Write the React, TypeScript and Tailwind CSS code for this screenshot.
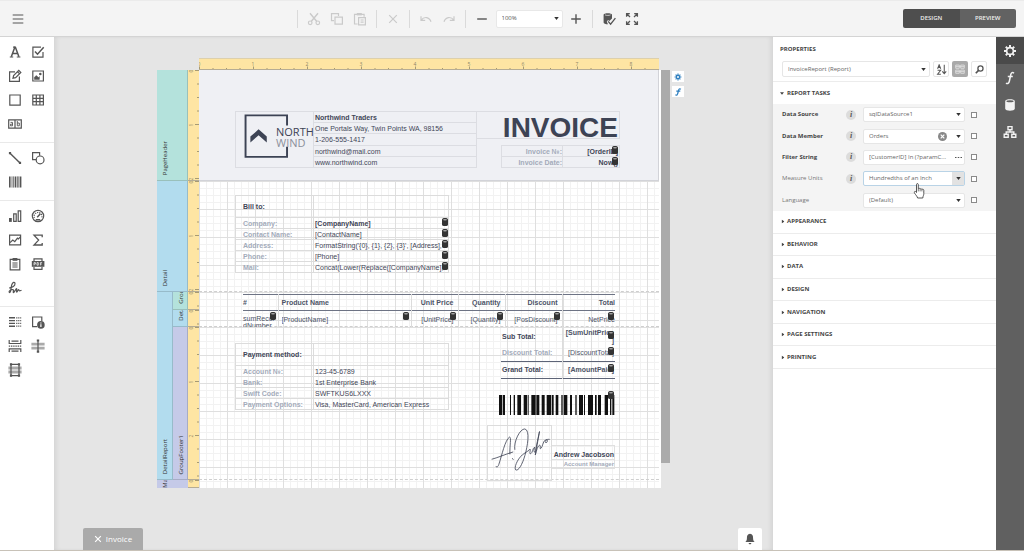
import { useState } from "react";
import type { ReactNode } from "react";
import clsx from "clsx";

interface ChildrenProps {
  children: ReactNode;
}

// ---------- shared bits ----------

function Icon({
  children,
  className = "w-3.5 h-3.5",
  strokeWidth = 1.2,
}: ChildrenProps & { className?: string; strokeWidth?: number }) {
  return (
    <svg
      viewBox="0 0 14 14"
      className={clsx("shrink-0", className)}
      fill="none"
      stroke="currentColor"
      strokeWidth={strokeWidth}
      aria-hidden="true"
    >
      {children}
    </svg>
  );
}

function Caret({ className, size = "w-[5px] h-[3px]" }: { className?: string; size?: string }) {
  return (
    <svg viewBox="0 0 6 4" className={clsx("shrink-0", size, className)} aria-hidden="true">
      <path d="M0 0h6L3 4z" fill="currentColor" />
    </svg>
  );
}

function DbMark({ className = "top-0 right-px" }: { className?: string }) {
  return (
    <svg viewBox="0 0 6 8" className={clsx("absolute w-1.5 h-2", className)} aria-hidden="true">
      <path d="M0 1.6C0 .7 1 0 3 0s3 .7 3 1.6v4.8C6 7.3 5 8 3 8S0 7.3 0 6.4z" fill="#333" />
      <ellipse cx="3" cy="1.7" rx="2" ry=".7" fill="#aaa" />
    </svg>
  );
}

// ---------- toolbox ----------

const tools: { name: string; icon: ReactNode }[][] = [
  [
    {
      name: "Label",
      icon: (
        <>
          <path d="M3.3 11.8 6.8 2.2h.6l3.5 9.6M4.6 8.4h5" strokeWidth={1.5} />
          <path d="M1.8 12h3.4M8.8 12h3.6M5 2.2h2" />
        </>
      ),
    },
    {
      name: "Check Box",
      icon: (
        <>
          <path d="M12 7v5.2H1.9V2.1H10" />
          <path d="m4 6.4 2.5 2.8 6.2-7" strokeWidth={1.5} />
        </>
      ),
    },
    {
      name: "Rich Text",
      icon: (
        <>
          <path d="M7 2.8H1.6v9.6h9.8V7.6" />
          <path d="m5 9.2.6-2.6 5.2-5.2 2 2-5.2 5.2zM9.6 2.8l2 2" />
        </>
      ),
    },
    {
      name: "Picture Box",
      icon: (
        <>
          <path d="M1.8 2h10.6v10H1.8z" />
          <path d="M3.4 10.4V8.2l2-1.6 2 2 1-1v2.8z" fill="currentColor" strokeWidth={0.5} />
          <circle cx="9.3" cy="5" r="1.3" fill="currentColor" stroke="none" />
        </>
      ),
    },
    { name: "Panel", icon: <path d="M1.8 2h10.4v10.2H1.8z" /> },
    { name: "Table", icon: <path d="M1.8 2h10.6v10H1.8zM5.3 2v10M8.9 2v10M1.8 5.3h10.6M1.8 8.7h10.6" /> },
    {
      name: "Character Comb",
      icon: (
        <>
          <path d="M.7 2.8h12.6v8.4H.7zM7 2.8v8.4" />
          <path d="M2.5 5.4h2v3.4h-2V7.2h2M9.3 4v4.8h2V6h-2" strokeWidth={0.9} />
        </>
      ),
    },
  ],
  [
    {
      name: "Line",
      icon: (
        <>
          <path d="m2 2.2 10 9.8" strokeWidth={1.4} />
          <path d="M.9 1.1h2.2v2.2H.9zM10.9 10.8h2.2V13h-2.2z" fill="currentColor" stroke="none" />
        </>
      ),
    },
    {
      name: "Shape",
      icon: (
        <>
          <path d="M5.2 8.6H1.6V1.7h7v3" />
          <circle cx="9.1" cy="8.9" r="3.9" />
        </>
      ),
    },
    {
      name: "Barcode",
      icon: (
        <>
          <path d="M1.8 1.4v11.2M7.5 1.4v11.2M12.6 1.4v11.2" strokeWidth={1.6} />
          <path d="M4 1.4v11.2M5.6 1.4v11.2M9.4 1.4v11.2M10.8 1.4v11.2" strokeWidth={0.8} />
        </>
      ),
    },
  ],
  [
    {
      name: "Chart",
      icon: (
        <>
          <path d="M5.7 4.8h2.5v7.6H5.7zM10.2 1.8h2.5v10.6h-2.5z" />
          <path d="M1 9h2.8v3.9H1z" fill="currentColor" stroke="none" />
        </>
      ),
    },
    {
      name: "Gauge",
      icon: (
        <>
          <circle cx="7" cy="7" r="5.7" />
          <path d="M3.3 9a4 4 0 1 1 7.4 0" strokeDasharray="1.2 1" />
          <path d="M6.2 8.2 9.4 4.8M4.8 10.8h4.4" strokeWidth={1.5} />
        </>
      ),
    },
    {
      name: "Sparkline",
      icon: (
        <>
          <path d="M1.6 2.2h11v9.6h-11z" />
          <path d="M2 9.6 4.8 7l2 1.6 2.6-3.4 1 .8 2-2.2" />
        </>
      ),
    },
    { name: "Pivot Grid", icon: <path d="M11.2 4.2v-2H3l4.6 4.9L3 12h8.2v-2" strokeWidth={1.3} /> },
    {
      name: "Subreport",
      icon: (
        <>
          <path d="M2.2 2.4h9.6v10.4H2.2zM4.4 6h5.2M4.4 8h5.2M4.4 10h5.2" />
          <path d="M4.6 1h4.8v2.8H4.6z" fill="currentColor" stroke="none" />
        </>
      ),
    },
    {
      name: "PDF Content",
      icon: (
        <>
          <path d="M3 4V1.8h8V4M3 10v2.4h8V10" />
          <path d="M.8 4h12.6v5.8H.8z" fill="currentColor" stroke="none" />
          <path d="M3 8.4V5.6h1.4v1.5H3M6 5.6v2.6h1.3V5.6zM9.4 8.4V5.6h1.7M9.4 7h1.4" stroke="#fff" strokeWidth={0.7} />
        </>
      ),
    },
    {
      name: "PDF Signature",
      icon: (
        <path d="M1.2 6.8c3 .2 6-2 5.8-4.2C6.8.6 4.6 1 3.7 4 2.9 6.8 3.1 9.7 2.3 11c-.8 1.2-1.6.2-.9-.8 1.2-1.6 3.9-2.2 4.2-.8.1 1-1 1.7-.2 2.2 1.2.5 2.2-4 3.2-3.9.8.2-.7 3.2.1 3.4.9.1 1.2-2.5 2-2.4.6.2 0 1.3 1 1.2.6-.1 1-.4 1.8-.7" />
      ),
    },
  ],
  [
    {
      name: "Table of Contents",
      icon: (
        <>
          <path d="M1 2.8h6M1 5.6h6M1 8.4h6M1 11.2h6" strokeWidth={1.4} />
          <path d="M8.2 2.8h5M8.2 5.6h5M8.2 8.4h5M8.2 11.2h5" strokeDasharray="1.2 .8" />
        </>
      ),
    },
    {
      name: "Page Info",
      icon: (
        <>
          <path d="M6 11.6H1.6V2h9.2v4" />
          <circle cx="9.9" cy="9.9" r="3.8" fill="currentColor" stroke="none" />
          <path d="M9.9 9.3v2.8M9.9 7.5v1" stroke="#fff" />
        </>
      ),
    },
    {
      name: "Page Break",
      icon: (
        <>
          <path d="M1.2 1v3.5h11.6V1M3.5 2.2h7M1.2 13V9.8h11.6V13M3.5 12.2h7" />
          <path d="M.8 7.1h12.6" strokeDasharray="1.4 .8" />
        </>
      ),
    },
    {
      name: "Cross-Band Line",
      icon: (
        <>
          <path d="M.4 3.8h13.2v2.8H.4zM.4 7.8h13.2v2.8H.4z" fill="#aaa" stroke="none" />
          <path d="M7 1v12" />
          <path d="M5.8.4h2.4v2.2H5.8zM5.8 11.6h2.4v2.2H5.8z" fill="currentColor" stroke="none" />
        </>
      ),
    },
    {
      name: "Cross-Band Box",
      icon: (
        <>
          <path d="M.4 3.6h13.2v3H.4zM.4 7.6h13.2v3H.4z" fill="#aaa" stroke="none" />
          <path d="M3 1.4h8v11.2H3z" />
          <path d="M1.9.3h2.2v2.2H1.9zM9.9.3h2.2v2.2H9.9zM1.9 11.5h2.2v2.2H1.9zM9.9 11.5h2.2v2.2H9.9z" fill="currentColor" stroke="none" />
        </>
      ),
    },
  ],
];

function Toolbox() {
  return (
    <aside className="w-[54px] shrink-0 bg-white text-[#555]">
      {tools.map((group, i) => (
        <div
          key={i}
          className={clsx(
            "grid grid-cols-2 pl-1 pr-[5px] pt-[3px] pb-1.5",
            i < tools.length - 1 && "border-b border-[#e9e9e9]"
          )}
        >
          {group.map((tool) => (
            <button key={tool.name} aria-label={tool.name} className="h-6 flex items-center justify-center">
              <Icon>{tool.icon}</Icon>
            </button>
          ))}
        </div>
      ))}
    </aside>
  );
}

// ---------- top bar ----------

function BarButton({ label, children, disabled }: ChildrenProps & { label: string; disabled?: boolean }) {
  return (
    <button
      aria-label={label}
      disabled={disabled}
      className={clsx(
        "w-[23px] h-6 flex items-center justify-center",
        disabled ? "text-[#cacaca]" : "text-[#555]"
      )}
    >
      <Icon>{children}</Icon>
    </button>
  );
}

function BarGroup({ children }: ChildrenProps) {
  return <div className="flex items-center h-[18px] border-l border-[#dadada] pl-[5px] pr-1">{children}</div>;
}

function TopBar() {
  return (
    <header className="h-[37px] shrink-0 flex items-center justify-between bg-[#f4f4f4] border-t border-b border-t-[#ebebeb] border-b-[#d4d4d4]">
      <button aria-label="Menu" className="w-[35px] mr-1.5 h-6 flex items-center justify-center text-[#555]">
        <Icon strokeWidth={1.1}>
          <path d="M1.7 3h10.6M1.7 7h10.6M1.7 11h10.6" />
        </Icon>
      </button>
      <div className="flex items-center">
        <BarGroup>
          <BarButton label="Cut" disabled>
            <path d="m3 1.2 6.6 8M11 1.2l-6.6 8" strokeWidth={1.4} />
            <circle cx="3.2" cy="10.8" r="1.8" />
            <circle cx="10.8" cy="10.8" r="1.8" />
          </BarButton>
          <BarButton label="Copy" disabled>
            <path d="M4 8.6H1.5v-7h7V4M5 5.2h7.4v7H5z" />
          </BarButton>
          <BarButton label="Paste" disabled>
            <path d="M4.6 12H1.5V2.4h9.6v2.4M5.6 5.6h6.8v7.2H5.6zM7.6 8h3M7.6 10.2h3" />
            <path d="M3.8 1h5v2.4h-5z" fill="currentColor" stroke="none" />
          </BarButton>
        </BarGroup>
        <BarGroup>
          <BarButton label="Delete" disabled>
            <path d="m3.2 3.2 7.6 7.6M10.8 3.2l-7.6 7.6" />
          </BarButton>
        </BarGroup>
        <BarGroup>
          <BarButton label="Undo" disabled>
            <path d="M2 4.2v4.2h4.2M2.2 8.2c2.8-4 8.2-3.6 9.8 1.6" />
          </BarButton>
          <BarButton label="Redo" disabled>
            <path d="M12 4.2v4.2H7.8M11.8 8.2C9 4.2 3.6 4.6 2 9.8" />
          </BarButton>
        </BarGroup>
        <BarGroup>
          <BarButton label="Zoom out">
            <path d="M2.2 7h9.6" strokeWidth={1.4} />
          </BarButton>
          <div className="relative mx-0.5">
            <select
              aria-label="Zoom"
              className="block appearance-none w-[67px] h-[18px] pl-[5px] rounded-xs border border-[#e8e8e8] bg-white text-[6px] text-[#555]"
            >
              <option>100%</option>
            </select>
            <Caret className="absolute right-1 top-[7px] text-[#333] pointer-events-none" />
          </div>
          <BarButton label="Zoom in">
            <path d="M2.2 7h9.6M7 2.2v9.6" strokeWidth={1.4} />
          </BarButton>
        </BarGroup>
        <BarGroup>
          <BarButton label="Validate bindings">
            <path d="M1.6 2.8c0-2 8.4-2 8.4 0v3.6L7.4 9 6 8l-1.2 1.8L6 12.2c-2.4 0-4.4-.6-4.4-1.8z" fill="currentColor" stroke="none" />
            <path d="M3 2.9c1.4.7 4.2.7 5.6 0" stroke="#f4f4f4" strokeWidth={0.7} />
            <path d="m6.2 9.4 2.4 2.8 4.8-6" strokeWidth={1.3} />
          </BarButton>
          <BarButton label="Full screen">
            <path d="M1.6 4.8V1.6h3.2M9.2 1.6h3.2v3.2M12.4 9.2v3.2H9.2M4.8 12.4H1.6V9.2M2 2l3 3M12 2 9 5M12 12 9 9M2 12l3-3" strokeWidth={1.3} />
          </BarButton>
        </BarGroup>
      </div>
      <div className="flex w-[113px] mr-2 h-[19px] rounded-xs overflow-hidden text-[6px] font-semibold text-[#eee]">
        <button className="flex-1 bg-[#4e4e4e]">DESIGN</button>
        <button className="flex-1 bg-[#626262]">PREVIEW</button>
      </div>
    </header>
  );
}

// ---------- report surface ----------

const INCH = 54;

function HorizontalRuler() {
  return (
    <svg className="block w-[460px] h-3 bg-[#fee5a3]" viewBox="0 0 460 12" aria-hidden="true">
      <path d="M0 .5h460" stroke="#ddd0ac" />
      {Array.from({ length: 34 }, (_, i) => (
        <path key={i} d={`M${i * (INCH / 4) + 0.5} ${i % 4 ? 10 : 8.5}V12`} stroke="#8f8668" strokeWidth={0.8} />
      ))}
      {Array.from({ length: 9 }, (_, n) => (
        <text key={n} x={n * INCH} y={7.5} textAnchor="middle" fontSize={5} fill="#8f8668">
          {n}
        </text>
      ))}
      <path d="M0 11.5h460" stroke="#b5ac94" />
    </svg>
  );
}

function VerticalRuler({ length, className }: { length: number; className: string }) {
  return (
    <svg
      className={clsx("block w-[11px] bg-[#fee5a3]", className)}
      viewBox={`0 0 11 ${length}`}
      aria-hidden="true"
    >
      {Array.from({ length: Math.ceil((length / INCH) * 4) }, (_, i) => (
        <path key={i} d={`M${i % 4 ? 9 : 7} ${i * (INCH / 4) + 0.5}H11`} stroke="#8f8668" strokeWidth={0.8} />
      ))}
      {Array.from({ length: Math.ceil(length / INCH) }, (_, n) => (
        <text key={n} transform={`translate(5 ${n * INCH + 1}) rotate(-90)`} textAnchor="middle" fontSize={5} fill="#8f8668">
          {n}
        </text>
      ))}
      <path d={`M0 ${length - 0.5}H11`} stroke="#b5ac94" />
    </svg>
  );
}

function BandLabel({ children, className }: ChildrenProps & { className: string }) {
  return (
    <div className={clsx("flex items-end overflow-hidden pl-1 pb-[5px] border-b border-r border-black/15", className)}>
      <span className="[writing-mode:vertical-rl] rotate-180 text-[6px] leading-[8px] text-[#333]">{children}</span>
    </div>
  );
}

interface InfoRow {
  label: string;
  value: string;
  bound?: boolean;
  strong?: boolean;
}

function InfoTable({ title, rows }: { title: string; rows: InfoRow[] }) {
  return (
    <table className="w-[214px] table-fixed border-collapse text-[#3f4657]">
      <thead>
        <tr className="h-[22px]">
          <th className="w-[78px] border border-[#dcdcdc] pl-[7px] text-left">{title}</th>
          <td className="border border-[#dcdcdc]" />
        </tr>
      </thead>
      <tbody>
        {rows.map((row) => (
          <tr key={row.label} className="h-[11px]">
            <th className="border border-[#dcdcdc] pl-[7px] text-left text-[#a3abba]">{row.label}</th>
            <td
              className={clsx(
                "relative border border-[#dcdcdc] pl-px whitespace-nowrap overflow-hidden",
                row.strong && "font-bold"
              )}
            >
              {row.value}
              {row.bound && <DbMark className="top-0 right-0" />}
            </td>
          </tr>
        ))}
      </tbody>
    </table>
  );
}

const billRows: InfoRow[] = [
  { label: "Company:", value: "[CompanyName]", bound: true, strong: true },
  { label: "Contact Name:", value: "[ContactName]", bound: true },
  { label: "Address:", value: "FormatString('{0}, {1}, {2}, {3}', [Address],", bound: true },
  { label: "Phone:", value: "[Phone]", bound: true },
  { label: "Mail:", value: "Concat(Lower(Replace([CompanyName],", bound: true },
];

const paymentRows: InfoRow[] = [
  { label: "Account №:", value: "123-45-6789" },
  { label: "Bank:", value: "1st Enterprise Bank" },
  { label: "Swift Code:", value: "SWFTKUS6LXXX" },
  { label: "Payment Options:", value: "Visa, MasterCard, American Express" },
];

const companyLines = [
  "Northwind Traders",
  "One Portals Way, Twin Points WA, 98156",
  "1-206-555-1417",
  "northwind@mail.com",
  "www.northwind.com",
];

function Logo() {
  return (
    <div className="relative w-[79px] h-[57px] border border-[#dcdde2]">
      <svg viewBox="0 0 79 57" className="w-full h-full" aria-hidden="true">
        <path d="M52.5 14V3.5h-43v43h43V36" fill="none" stroke="#3d4354" strokeWidth="2" />
        <path d="M14.5 25.5 23 18l8.5 7.5v6L23 24l-8.5 7.5z" fill="#3d4354" />
      </svg>
      <div className="absolute left-10 top-3.5 font-['Open_Sans'] text-[11px] leading-[11px] text-[#3d4354]">
        <p>NORTH</p>
        <p className="text-[#8b8f9b]">WIND</p>
      </div>
    </div>
  );
}

function PageHeaderBand() {
  return (
    <section className="h-[111px] flex items-start pl-9 pt-[41px] bg-[#eff0f4] border-b border-r border-[#d2d3d8]">
      <Logo />
      <ul className="w-[163px] h-[57px] grid auto-rows-fr border-r border-t border-[#dcdde2]">
        {companyLines.map((line, i) => (
          <li key={line} className={clsx("pl-px border-b border-[#dcdde2] leading-[11px]", i === 0 && "font-bold")}>
            {line}
          </li>
        ))}
      </ul>
      <div className="w-[143px] flex flex-col items-end">
        <h1 className="w-full h-7 pr-px border border-l-0 border-[#dcdde2] text-right text-[28px] leading-[32px] font-bold text-[#3d4354]">
          INVOICE
        </h1>
        <table className="mt-1.5 w-[119px] table-fixed border-collapse text-right font-bold">
          <tbody>
            <tr className="h-[11px]">
              <th className="border border-[#dcdde2] text-[#a3abba]">Invoice №:</th>
              <td className="relative w-[57px] pr-px border border-[#dcdde2]">
                [OrderID]
                <DbMark />
              </td>
            </tr>
            <tr className="h-[11px]">
              <th className="border border-[#dcdde2] text-[#a3abba]">Invoice Date:</th>
              <td className="relative pr-px border border-[#dcdde2]">
                Now()
                <DbMark />
              </td>
            </tr>
          </tbody>
        </table>
      </div>
    </section>
  );
}

const columns = [
  { title: "#", field: "sumRecordNumber" },
  { title: "Product Name", field: "[ProductName]" },
  { title: "Unit Price", field: "[UnitPrice]" },
  { title: "Quantity", field: "[Quantity]" },
  { title: "Discount", field: "[PosDiscount]" },
  { title: "Total", field: "NetPrice" },
];

function ProductTable() {
  return (
    <div className="ml-11 mr-11">
      <table className="w-full table-fixed border-collapse text-[#4d5467]">
        <colgroup>
          <col className="w-[35px]" />
          <col />
          <col className="w-[47px]" />
          <col className="w-[47px]" />
          <col className="w-[57px]" />
          <col className="w-[53px]" />
        </colgroup>
        <thead>
          <tr className="h-4 border-t border-b border-[#6d7384]">
            {columns.map((col, i) => (
              <th
                key={col.title}
                className={clsx(
                  i > 0 && "border-l border-l-[#dcdcdc]",
                  i < 2 ? "text-left" : "text-right",
                  i === 1 && "pl-[3px]",
                  i > 1 && i < 5 && "pr-1"
                )}
              >
                {col.title}
              </th>
            ))}
          </tr>
        </thead>
        <tbody>
          <tr>
            {columns.map((col, i) => (
              <td
                key={col.title}
                className={clsx(
                  "relative",
                  i > 0 && "border-l border-l-[#dcdcdc]",
                  i === 1 && "pl-[3px]",
                  i > 1 && "text-right",
                  i > 1 && i < 5 && "pr-1"
                )}
              >
                <div className={clsx("h-4 overflow-hidden", i === 0 ? "pt-1 leading-[7px] break-all" : "leading-[18px]")}>
                  {col.field}
                </div>
                <DbMark className={i === 5 ? "top-px right-px" : "top-px right-0.5"} />
              </td>
            ))}
          </tr>
        </tbody>
      </table>
    </div>
  );
}

// start / end pairs of the dark bars, 3 units per pixel
const bars = [
  [0, 10], [12, 18], [33, 36], [44, 48], [55, 66], [74, 84], [86, 89], [97, 110], [112, 121],
  [128, 137], [143, 156], [158, 164], [170, 178], [187, 191], [194, 205], [213, 219], [229, 233],
  [240, 252], [255, 258], [267, 282], [288, 293], [297, 306], [317, 327], [333, 337], [340, 346],
];

function Totals() {
  return (
    <table className="mt-px w-[114px] table-fixed border-collapse text-[#4d5467] font-bold">
      <tbody>
        <tr className="h-[17px]">
          <th className="w-[61px] pl-px text-left text-[#3f4657]">Sub Total:</th>
          <td className="relative border-l border-[#dcdcdc] pr-px text-right leading-[8px]">
            [SumUnitPrice
            <br />]
            <DbMark className="top-[3px] right-px" />
          </td>
        </tr>
        <tr className="h-4 border-b border-b-[#5d6477]">
          <th className="pl-px text-left text-[#a3abba] whitespace-nowrap">Discount Total:</th>
          <td className="relative border-l border-l-[#dcdcdc] pr-px text-right font-normal">
            [DiscountTotal]
            <DbMark className="top-0.5 right-px" />
          </td>
        </tr>
        <tr className="h-[17px] border-b border-b-[#5d6477]">
          <th className="pl-px text-left text-[#3f4657]">Grand Total:</th>
          <td className="relative border-l border-l-[#dcdcdc] pr-px text-right">
            [AmountPaid]
            <DbMark className="top-0.5 right-px" />
          </td>
        </tr>
      </tbody>
    </table>
  );
}

function GroupFooterBand() {
  return (
    <section className="h-[153px] flex items-start justify-between pl-9 pr-11 border-b border-dashed border-[#cfcfcf]">
      <div className="pt-4">
        <InfoTable title="Payment method:" rows={paymentRows} />
      </div>
      <div className="w-32 flex flex-col items-end">
        <Totals />
        <div className="relative mt-4 w-[116px]">
          <svg viewBox="0 0 348 60" className="w-[116px] h-5" role="img" aria-label="Barcode">
            {bars.map(([from, to]) => (
              <path key={from} d={`M${from} 0H${to}V60H${from}z`} fill="#111" />
            ))}
          </svg>
          <DbMark className="-top-1 right-px" />
        </div>
        <div className="mt-2.5 w-full flex items-start">
          <div className="w-[65px] h-14 shrink-0 border border-[#dcdcdc]">
            <svg viewBox="0 0 193 166" className="w-full h-full" fill="none" stroke="#3d4354" strokeWidth="2.5" strokeLinecap="round" aria-hidden="true">
              <path d="M24 124c2 4 6 3 9-6C42 92 52 42 66 34c6 0 0 26 1 52M12 102c16-4 38-14 64-22M75 100l2 3" />
              <path d="M82 72C78 48 98 8 113 9c17 4 8 54 0 82-8 28-20 48-28 44-6-6 4-32 20-46 12-10 20-12 24-18 2 6-4 16 2 14s6-18 12-20c-2 8-4 16 2 16 2-14 10-50 13-64-2 10-8 46-13 72 4-14 8-30 14-30 4 2-2 14 3 10 6-4 6-22 14-26s8 8 2 8-2-12 10-10" />
            </svg>
          </div>
          <div className="flex-1 mt-5 text-right font-bold whitespace-nowrap">
            <p className="h-[15px] pt-1 flex justify-end border border-l-0 border-[#e0e0e0] leading-[9px] text-[#3f4657]">
              Andrew Jacobson
            </p>
            <p className="h-[9px] border border-t-0 border-l-0 border-[#e0e0e0] text-[6px] leading-[9px] text-[#a3abba]">
              Account Manager
            </p>
          </div>
        </div>
      </div>
    </section>
  );
}

const grid =
  "bg-[linear-gradient(to_right,#dfdfdf_1px,transparent_1px),linear-gradient(to_bottom,#dfdfdf_1px,transparent_1px),linear-gradient(to_right,#f2f2f2_1px,transparent_1px),linear-gradient(to_bottom,#f2f2f2_1px,transparent_1px)] bg-[size:28px_28px,28px_28px,7px_7px,7px_7px]";

function ReportSurface() {
  return (
    <div className="pl-[103px] pt-[21px]">
      <div className="pl-[42px]">
        <HorizontalRuler />
      </div>
      <div className="flex items-start">
        <div className="w-[31px] shrink-0">
          <BandLabel className="h-[111px] bg-[#b4e2dc]">PageHeader</BandLabel>
          <BandLabel className="h-[111px] bg-[#b2dcee]">Detail</BandLabel>
          <div className="flex">
            <BandLabel className="w-4 h-[188px] bg-[#b2dcee]">DetailReport</BandLabel>
            <div className="flex-1">
              <BandLabel className="h-[18px] bg-[#b4e2dc]">GroupHeader1</BandLabel>
              <BandLabel className="h-[17px] bg-[#b2dcee]">Detail1</BandLabel>
              <BandLabel className="h-[153px] bg-[#c5cae8]">GroupFooter1</BandLabel>
            </div>
          </div>
          <div className="h-2 flex items-end overflow-hidden pl-1 bg-[#c5cae8]">
            <span className="[writing-mode:vertical-rl] rotate-180 text-[6px] leading-[8px] text-[#333]">Margin</span>
          </div>
        </div>
        <div className="w-[11px] shrink-0">
          <VerticalRuler length={111} className="h-[111px]" />
          <VerticalRuler length={111} className="h-[111px]" />
          <VerticalRuler length={18} className="h-[18px]" />
          <VerticalRuler length={17} className="h-[17px]" />
          <VerticalRuler length={153} className="h-[153px]" />
          <VerticalRuler length={8} className="h-2" />
        </div>
        <main className="w-[462px] shrink-0 pr-0.5 bg-white font-['Liberation_Sans',sans-serif] text-[7px] leading-[9px] text-[#3f4657]">
          <PageHeaderBand />
          <section className={clsx("h-[111px] pl-9 pt-3.5 border-b border-dashed border-[#cfcfcf]", grid)}>
            <InfoTable title="Bill to:" rows={billRows} />
          </section>
          <section className={clsx("h-[35px] pt-0.5 border-b border-dashed border-[#cfcfcf]", grid)}>
            <ProductTable />
          </section>
          <div className={grid}>
            <GroupFooterBand />
            <div className="h-2" />
          </div>
        </main>
        <div className="w-[9px] h-[393px] shrink-0 bg-[#ababab]" />
        <div className="ml-0.5 pt-px flex flex-col gap-1 text-[#2f7fbf]">
          <button aria-label="Band settings" className="w-3 h-[11px] bg-white flex items-center justify-center">
            <Icon className="w-2 h-2" strokeWidth={2.6}>
              <circle cx="7" cy="7" r="3" />
              <path d="M7 1v2M7 11v2M1 7h2M11 7h2M2.8 2.8l1.4 1.4M9.8 9.8l1.4 1.4M2.8 11.2l1.4-1.4M9.8 4.2l1.4-1.4" strokeWidth={2} />
            </Icon>
          </button>
          <button aria-label="Band expressions" className="w-3 h-[11px] bg-white flex items-center justify-center">
            <Icon className="w-2 h-2" strokeWidth={2.2}>
              <path d="M12 2.2C9.6.4 8.4 2 8 4L6.4 10c-.5 2.4-2 3.4-4 2M4 5.6h7" />
            </Icon>
          </button>
        </div>
      </div>
    </div>
  );
}

function Canvas() {
  return (
    <div className="relative flex-1 min-w-0 bg-[#e5e5e5] shadow-[inset_4px_0_5px_-2px_rgba(0,0,0,0.08),inset_-4px_0_5px_-2px_rgba(0,0,0,0.08)]">
      <ReportSurface />
      <button className="absolute left-[29px] bottom-0 w-[60px] h-[22px] rounded-t-xs bg-[#aaa] flex items-center justify-center gap-1 text-[8px] text-white">
        <Icon className="w-2 h-2" strokeWidth={2}>
          <path d="m2 2 10 10M12 2 2 12" />
        </Icon>
        Invoice
      </button>
      <button aria-label="Errors" className="absolute right-[11px] bottom-0 w-6 h-[22px] rounded-t-xs bg-white flex items-center justify-center text-[#555]">
        <Icon className="w-3 h-3">
          <path d="M7 1c-3 .6-3.6 2.6-3.6 5 0 2.4-.6 3.4-2 4.6h11.2c-1.4-1.2-2-2.2-2-4.6 0-2.4-.6-4.4-3.6-5z" fill="currentColor" stroke="none" />
          <path d="M5.4 11.6h3.2c0 2-3.2 2-3.2 0z" fill="currentColor" stroke="none" />
        </Icon>
      </button>
    </div>
  );
}

// ---------- properties panel ----------

interface Property {
  id: string;
  label: string;
  value: string;
  strong?: boolean;
  info?: boolean;
  kind?: "clearable" | "text" | "focused";
}

const properties: Property[] = [
  { id: "source", label: "Data Source", value: "sqlDataSource1", strong: true, info: true },
  { id: "member", label: "Data Member", value: "Orders", strong: true, info: true, kind: "clearable" },
  { id: "filter", label: "Filter String", value: "[CustomerID] In (?paramC...", strong: true, info: true, kind: "text" },
  { id: "units", label: "Measure Units", value: "Hundredths of an Inch", info: true, kind: "focused" },
  { id: "language", label: "Language", value: "(Default)" },
];

const sections = ["APPEARANCE", "BEHAVIOR", "DATA", "DESIGN", "NAVIGATION", "PAGE SETTINGS", "PRINTING"];

function HandCursor() {
  return (
    <svg viewBox="0 0 12 16" className="absolute z-10 left-[50px] top-3 w-3 h-4 pointer-events-none" aria-hidden="true">
      <path
        d="M3.5 9.5V1.6c0-1.4 1.8-1.4 1.8 0v4.2c.4-.8 1.7-.6 1.8.3.5-.7 1.7-.4 1.8.4.6-.6 1.9-.3 1.9.8v3.4c0 1.6-.8 2.2-1 4.3H4.6c-.3-1.6-1.6-2.6-3-4.8C.8 8.7 2 7.9 2.8 8.7z"
        fill="#fff"
        stroke="#444"
        strokeWidth="0.9"
      />
      <path d="M5.3 5.8v2.6M7.1 6.2v2.2M8.9 6.6v1.8" stroke="#444" strokeWidth="0.7" />
    </svg>
  );
}

function PropertyEditor({ prop }: { prop: Property }) {
  const [value, setValue] = useState(prop.value);
  const box = "block w-full h-[15px] pl-[5px] rounded-xs border bg-white text-[6px] text-[#666]";

  if (prop.kind === "text") {
    return (
      <div className="relative w-[102px]">
        <input
          id={prop.id}
          value={value}
          onChange={(e) => setValue(e.target.value)}
          className={clsx(box, "border-[#e6e6e6] pr-3")}
        />
        <button aria-label="Edit filter" className="absolute right-[3px] top-0 h-[15px] flex items-center text-[#555]">
          <Icon className="w-[7px] h-[7px]">
            <path d="M0 7h3M5.5 7h3M11 7h3" strokeWidth={2.4} />
          </Icon>
        </button>
      </div>
    );
  }

  return (
    <div className="relative w-[102px]">
      <select
        id={prop.id}
        className={clsx(box, "appearance-none", prop.kind === "focused" ? "border-[#b9d3e6]" : "border-[#e6e6e6]")}
      >
        <option>{prop.value}</option>
      </select>
      {prop.kind === "clearable" && (
        <button aria-label="Clear" className="absolute right-[18px] top-[3px] w-[9px] h-[9px] text-[#888]">
          <Icon className="block w-[9px] h-[9px]">
            <circle cx="7" cy="7" r="7" fill="currentColor" stroke="none" />
            <path d="m4.2 4.2 5.6 5.6M9.8 4.2 4.2 9.8" stroke="#fff" strokeWidth={1.8} />
          </Icon>
        </button>
      )}
      <span
        className={clsx(
          "absolute right-px top-px w-3 h-[13px] flex items-center justify-center text-[#333] pointer-events-none",
          prop.kind === "focused" && "bg-[#e2e2e2]"
        )}
      >
        <Caret />
      </span>
      {prop.kind === "focused" && <HandCursor />}
    </div>
  );
}

function PropertiesPanel() {
  return (
    <aside className="w-[223px] shrink-0 bg-white text-[6px] text-[#555]">
      <h2 className="h-6 pl-[7px] leading-6 font-bold text-[#444]">PROPERTIES</h2>
      <div className="h-[21px] pl-[9px] pr-[9px] pb-1 flex items-center justify-between border-b border-[#ececec]">
        <div className="relative">
          <select
            aria-label="Selected element"
            className="block appearance-none w-[148px] h-4 pl-[5px] rounded-xs border border-[#e6e6e6] text-[6px] text-[#666]"
          >
            <option>InvoiceReport (Report)</option>
          </select>
          <Caret className="absolute right-1 top-[7px] text-[#333] pointer-events-none" />
        </div>
        <button aria-label="Sort" className="w-4 h-4 border border-[#e6e6e6] rounded-xs flex items-center justify-center">
          <Icon className="w-[11px] h-[11px]" strokeWidth={1.3}>
            <path d="M2 6 4 1l2 5M2.6 4.5h2.8M2 8h4l-4 5h4.2" />
            <path d="M10.5 1v11M8 9.5l2.5 2.8L13 9.5" />
          </Icon>
        </button>
        <button aria-label="Categorize" className="w-4 h-4 bg-[#a9a9a9] rounded-xs flex items-center justify-center text-[#ddd]">
          <Icon className="w-2.5 h-2.5" strokeWidth={1.3}>
            <path d="M1 1.5h5V6H1zM8 1.5h5V6H8zM1 8.5h5V13H1zM8 8.5h5V13H8zM1 3.7h12M1 10.7h12" />
          </Icon>
        </button>
        <button aria-label="Search" className="w-4 h-4 border border-[#e6e6e6] rounded-xs flex items-center justify-center">
          <Icon className="w-[9px] h-[9px]" strokeWidth={2}>
            <circle cx="8.5" cy="5.5" r="4" />
            <path d="m5.5 8.5-4.3 4.3" strokeWidth={2.6} />
          </Icon>
        </button>
      </div>
      <button className="w-full h-[22px] pl-[7px] flex items-center gap-[3px] font-bold text-[#444]">
        <Caret size="w-1 h-[3px]" />
        REPORT TASKS
      </button>
      <div className="h-[107px] grid auto-rows-fr bg-[#f4f4f4] pl-[9px]">
        {properties.map((prop) => (
          <div key={prop.id} className="flex items-center">
            <label htmlFor={prop.id} className={clsx("w-16", prop.strong ? "font-bold text-[#444]" : "text-[#777]")}>
              {prop.label}
            </label>
            <span className="w-[17px]">
              {prop.info && (
                <span className="w-2.5 h-2.5 rounded-full bg-[#dcdcdc] flex items-center justify-center font-['Liberation_Serif',serif] text-[8px] italic font-bold">
                  i
                </span>
              )}
            </span>
            <PropertyEditor prop={prop} />
            <input
              type="checkbox"
              aria-label={`${prop.label} options`}
              className="appearance-none ml-1.5 w-1.5 h-1.5 border border-[#8a8a8a] bg-white"
            />
          </div>
        ))}
      </div>
      <div className="h-[158px] grid auto-rows-fr">
        {sections.map((name) => (
          <button key={name} className="pl-2 flex items-center gap-0.5 border-b border-[#ececec] font-bold text-[#444]">
            <Caret size="w-1 h-[3px]" className="-rotate-90" />
            {name}
          </button>
        ))}
      </div>
    </aside>
  );
}

function SideTab({ label, active, children }: ChildrenProps & { label: string; active?: boolean }) {
  return (
    <button
      aria-label={label}
      className={clsx("w-7 h-[27px] flex items-center justify-center text-[#f2f2f2]", active && "bg-[#4a4a4a]")}
    >
      <Icon>{children}</Icon>
    </button>
  );
}

function SideTabs() {
  return (
    <nav className="w-7 shrink-0 bg-[#606060]">
      <SideTab label="Properties" active>
        <circle cx="7" cy="7" r="3.4" strokeWidth={1.7} />
        <path d="M7 1v2.4M7 10.6V13M1 7h2.4M10.6 7H13M2.8 2.8l1.6 1.6M9.6 9.6l1.6 1.6M2.8 11.2l1.6-1.6M9.6 4.4l1.6-1.6" strokeWidth={2} />
      </SideTab>
      <SideTab label="Expressions">
        <path d="M11 2.2C9.2.6 8 2 7.7 4L6.4 10c-.5 2.4-1.8 3.2-3.4 2.1M4.8 5.4h5" strokeWidth={1.5} />
      </SideTab>
      <SideTab label="Fields">
        <path d="M2.2 3.2C2.2.7 11.8.7 11.8 3.2v7.6c0 2.5-9.6 2.5-9.6 0z" fill="currentColor" stroke="none" />
        <ellipse cx="7" cy="3.3" rx="3.6" ry="1" fill="#606060" stroke="none" />
      </SideTab>
      <SideTab label="Report explorer">
        <path d="M5 1.6h4v3.2H5zM1.2 9.2h4v3h-4zM8.8 9.2h4v3h-4zM7 4.8V7M3.2 9.2V7h7.6v2.2" strokeWidth={1.4} />
      </SideTab>
    </nav>
  );
}

export default function App() {
  return (
    <div className="h-screen flex flex-col border-b border-[#c8c2b8] bg-[#e5e5e5] font-['Open_Sans',sans-serif] overflow-hidden">
      <TopBar />
      <div className="flex-1 min-h-0 flex">
        <Toolbox />
        <Canvas />
        <PropertiesPanel />
        <SideTabs />
      </div>
    </div>
  );
}
